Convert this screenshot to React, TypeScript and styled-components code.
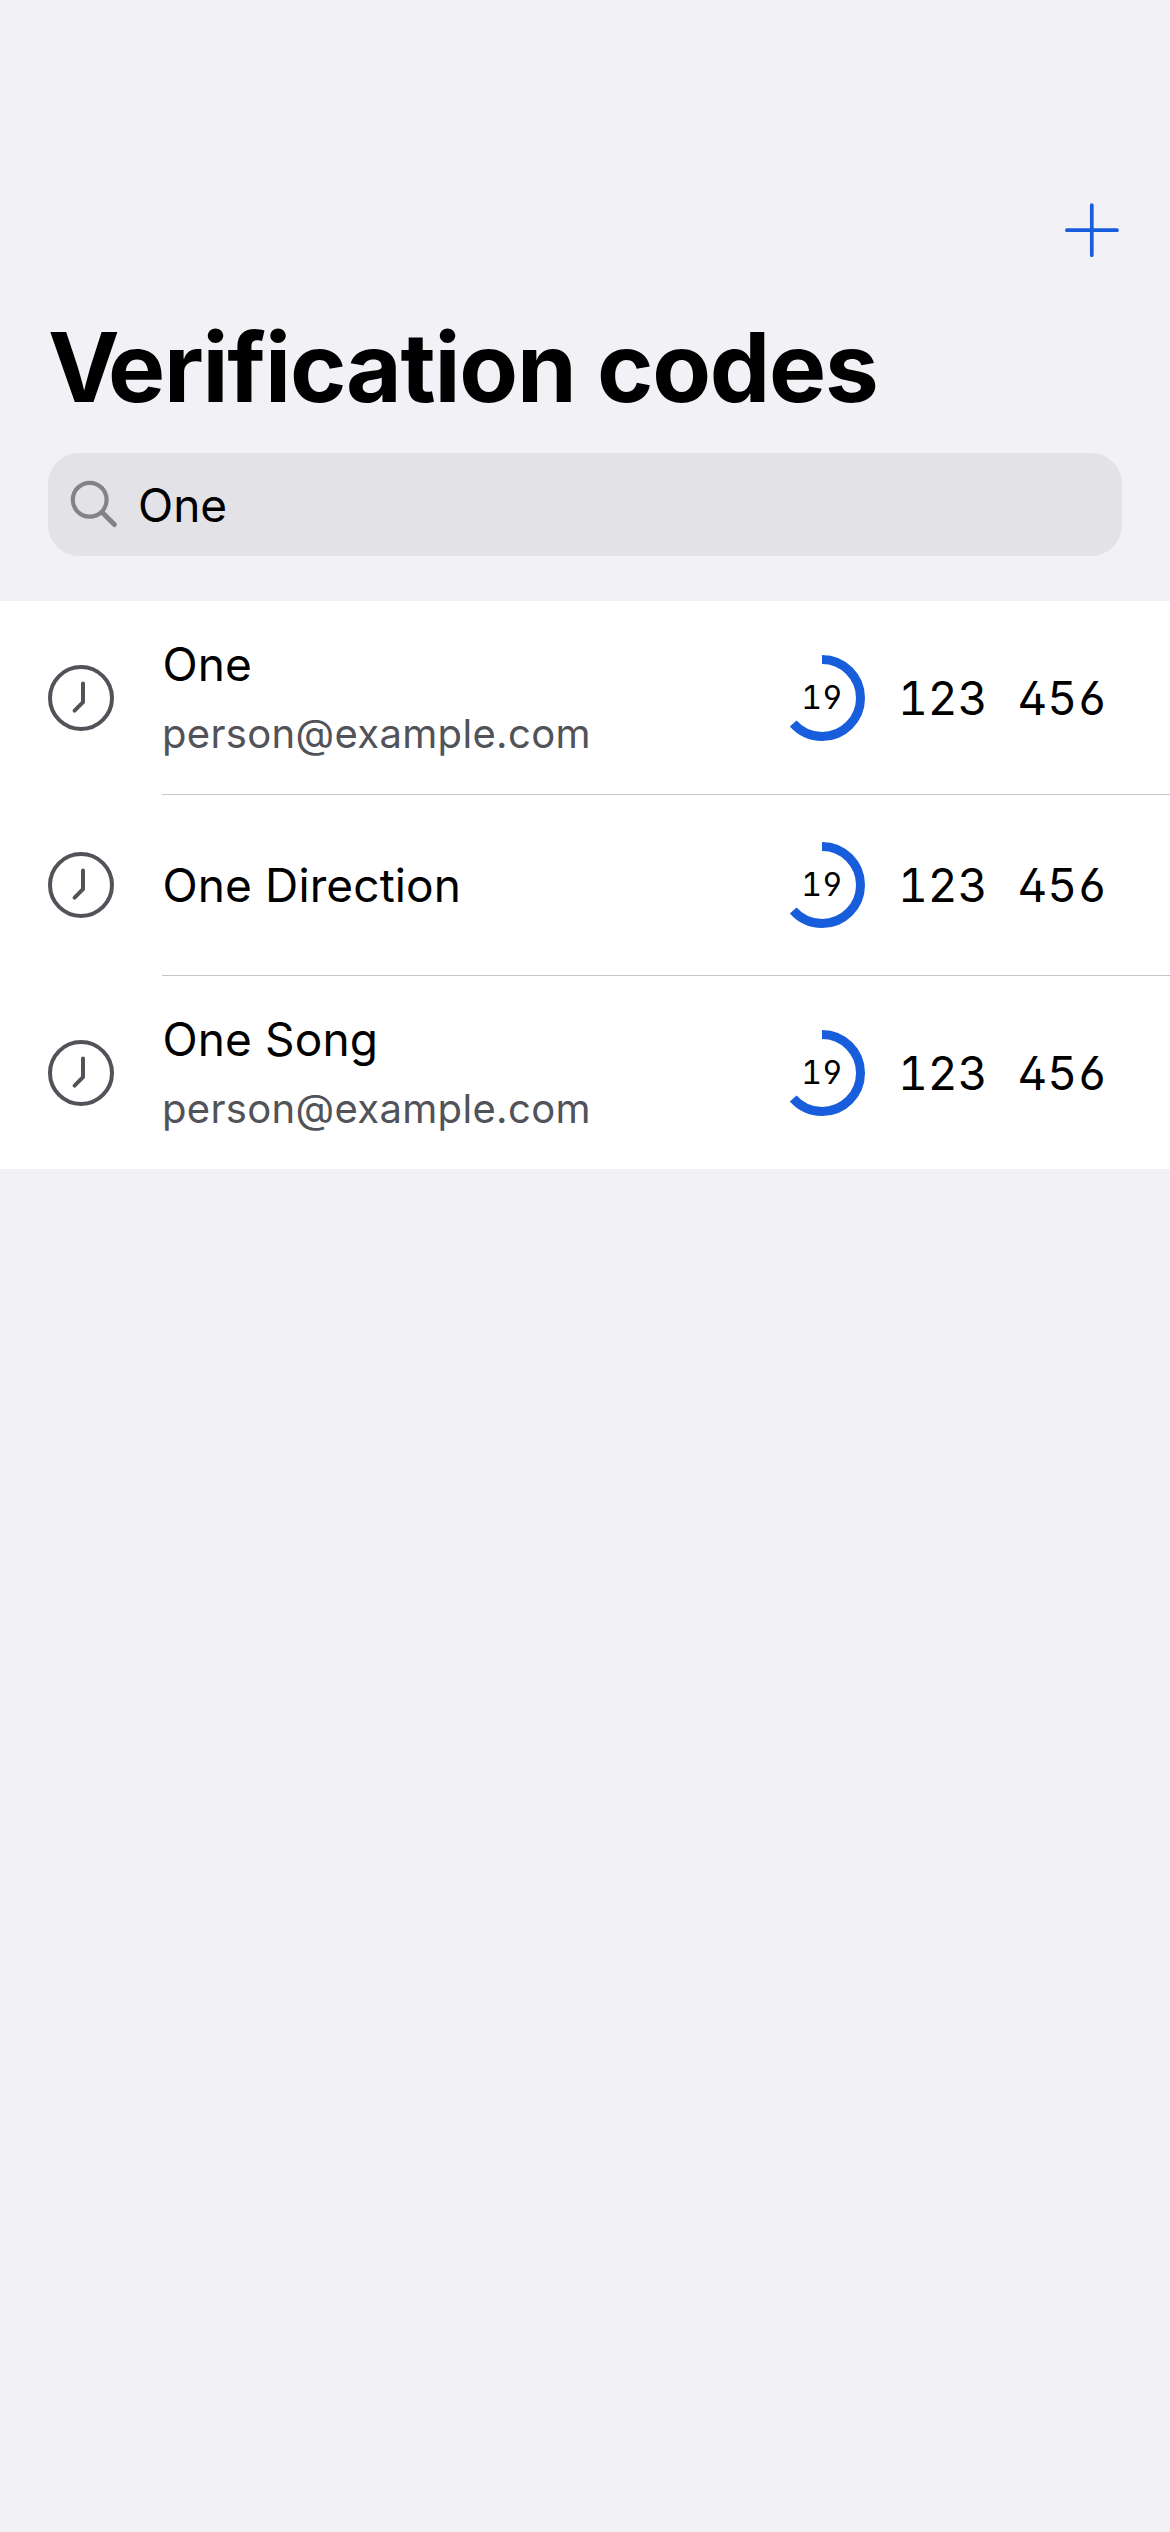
import React from "react";
import styled, { createGlobalStyle } from "styled-components";

const GlobalStyle = createGlobalStyle`
  *, *::before, *::after { box-sizing: border-box; }
  body {
    margin: 0;
    background: #f2f1f6;
    color: #000;
    font-family: Inter, "Liberation Sans", sans-serif;
  }
`;

const Screen = styled.main`
  display: flex;
  flex-direction: column;
  min-height: 2532px;
  background: #f2f1f6;
`;

const Toolbar = styled.header`
  display: flex;
  justify-content: flex-end;
  padding: 200px 48px 0 0;
`;

const AddButton = styled.button`
  display: flex;
  width: 60px;
  height: 60px;
  padding: 0;
  border: 0;
  background: none;
  color: #175ddc;
`;

const Title = styled.h1`
  margin: 47px 48px 0;
  font-size: 96px;
  font-weight: 700;
  line-height: 120px;
  letter-spacing: -1.24px;
  white-space: nowrap;

  /* tuck the lowercase under the arm of the V */
  &::first-letter {
    letter-spacing: -11.6px;
  }
`;

const SearchField = styled.div`
  display: flex;
  align-items: center;
  height: 103px;
  margin: 26px 48px 45px;
  padding-left: 22px;
  border-radius: 31px;
  background: #e3e2e7;
`;

const SearchText = styled.span`
  margin-left: 18px;
  font-size: 46px;
  line-height: 60px;
`;

const List = styled.ul`
  margin: 0;
  padding: 0;
  list-style: none;
  background: #fff;
`;

const RowIcon = styled.span`
  display: flex;
  align-items: center;
  color: #525259;
`;

const RowBody = styled.div<{ $tall: boolean }>`
  box-sizing: content-box;
  display: flex;
  flex: 1;
  align-items: center;
  height: ${(p) => (p.$tall ? 193 : 180)}px;
  padding-right: 63px;
`;

const Row = styled.li`
  display: flex;
  align-items: stretch;
  gap: 48px;
  padding-left: 48px;

  &:not(:last-child) ${RowIcon} {
    margin-bottom: 1px;
  }

  &:not(:last-child) ${RowBody} {
    border-bottom: 1px solid #c5c5c8;
  }
`;

const Labels = styled.div`
  display: flex;
  flex: 1;
  flex-direction: column;
  gap: 14px;
`;

const Name = styled.span`
  padding-left: 0.5px;
  font-size: 46px;
  line-height: 60px;
  letter-spacing: 0.12px;
`;

const Account = styled.span`
  margin-bottom: 1px;
  color: #525259;
  font-size: 40px;
  line-height: 52px;
  letter-spacing: 0.33px;
`;

const Timer = styled.div`
  display: grid;
  place-items: center;
  width: 86px;
  height: 86px;
  margin-right: 33px;

  > * {
    grid-area: 1 / 1;
  }
`;

const Digits = styled.span<{ $size: number }>`
  font-size: ${(p) => p.$size}px;
  line-height: 60px;
  font-feature-settings: "tnum", "cv02", "cv03", "cv04";
`;

const Code = styled.div`
  display: flex;
  gap: 30px;
`;

const PlusIcon = () => (
  <svg width="60" height="60" viewBox="0 0 60 60" fill="none" stroke="currentColor" strokeWidth="3.7" strokeLinecap="round">
    <path d="M4.9 30.2H55M29.8 5V55.2" />
  </svg>
);

const SearchIcon = () => (
  <svg width="50" height="50" viewBox="0 0 50 50" fill="none" stroke="#828287" strokeLinecap="round">
    <circle cx="19.7" cy="19.8" r="16.9" strokeWidth="4.2" />
    <path d="M32 32.2L44.4 44.6" strokeWidth="5" />
  </svg>
);

const ClockIcon = () => (
  <svg width="66" height="66" viewBox="0 0 66 66" fill="none" stroke="currentColor" strokeWidth="4" strokeLinecap="round" strokeLinejoin="round">
    <circle cx="33" cy="33" r="31" />
    <path d="M35 18.6V37.2L26.6 45.6" />
  </svg>
);

const PERIOD = 30;
const RADIUS = 38.5;

const Countdown = ({ seconds }: { seconds: number }) => {
  const length = 2 * Math.PI * RADIUS;
  return (
    <Timer>
      <svg width="86" height="86" viewBox="0 0 86 86" fill="none">
        <circle
          cx="43"
          cy="43"
          r={RADIUS}
          stroke="#175ddc"
          strokeWidth="9"
          strokeDasharray={`${(length * seconds) / PERIOD} ${length}`}
          transform="rotate(-90 43 43)"
        />
      </svg>
      <Digits $size={32}>{seconds}</Digits>
    </Timer>
  );
};

type Item = { name: string; account?: string; seconds: number; code: [string, string] };

const items: Item[] = [
  { name: "One", account: "person@example.com", seconds: 19, code: ["123", "456"] },
  { name: "One Direction", seconds: 19, code: ["123", "456"] },
  { name: "One Song", account: "person@example.com", seconds: 19, code: ["123", "456"] },
];

export default function App() {
  return (
    <Screen>
      <GlobalStyle />
      <Toolbar>
        <AddButton aria-label="Add">
          <PlusIcon />
        </AddButton>
      </Toolbar>
      <Title>Verification codes</Title>
      <SearchField>
        <SearchIcon />
        <SearchText>One</SearchText>
      </SearchField>
      <List>
        {items.map((item) => (
          <Row key={item.name}>
            <RowIcon>
              <ClockIcon />
            </RowIcon>
            <RowBody $tall={Boolean(item.account)}>
              <Labels>
                <Name>{item.name}</Name>
                {item.account && <Account>{item.account}</Account>}
              </Labels>
              <Countdown seconds={item.seconds} />
              <Code>
                {item.code.map((group) => (
                  <Digits key={group} $size={46}>
                    {group}
                  </Digits>
                ))}
              </Code>
            </RowBody>
          </Row>
        ))}
      </List>
    </Screen>
  );
}
